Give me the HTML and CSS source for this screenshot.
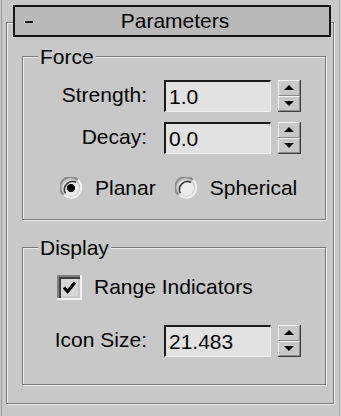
FILE: index.html
```html
<!DOCTYPE html>
<html>
<head>
<meta charset="utf-8">
<link rel="stylesheet" href="styles.css">
</head>
<body>
<div class="panel">
  <div class="rollout">
    <div class="title-btn">
      <span class="minus"></span>
      <span class="title-text">Parameters</span>
      <span></span>
    </div>

    <div class="group force">
      <div class="group-label">Force</div>
      <div class="rows">
        <div class="row-label">Strength:</div>
        <div class="field">1.0</div>
        <div class="spinner"><span class="spin up"><i></i></span><span class="spin down"><i></i></span></div>

        <div class="row-label">Decay:</div>
        <div class="field">0.0</div>
        <div class="spinner"><span class="spin up"><i></i></span><span class="spin down"><i></i></span></div>
      </div>
      <div class="radios">
        <label class="radio">
          <svg width="22" height="22" viewBox="0 0 22 22">
            <path d="M3.2 17.8 A10 10 0 0 1 18 3" fill="none" stroke="#8a8a8a" stroke-width="2"/>
            <path d="M18 3 A10 10 0 0 1 4 18" fill="none" stroke="#f0f0f0" stroke-width="2"/>
            <circle cx="11" cy="11" r="8" fill="#ececec"/>
            <path d="M5.4 16.2 A8 8 0 0 1 16.2 5.4" fill="none" stroke="#3c3c3c" stroke-width="1.6"/>
            <circle cx="11" cy="11" r="4" fill="#000"/>
          </svg>
          <span>Planar</span>
        </label>
        <label class="radio">
          <svg width="22" height="22" viewBox="0 0 22 22">
            <path d="M3.2 17.8 A10 10 0 0 1 18 3" fill="none" stroke="#8a8a8a" stroke-width="2"/>
            <path d="M18 3 A10 10 0 0 1 4 18" fill="none" stroke="#f0f0f0" stroke-width="2"/>
            <circle cx="11" cy="11" r="8" fill="#ececec"/>
            <path d="M5.4 16.2 A8 8 0 0 1 16.2 5.4" fill="none" stroke="#3c3c3c" stroke-width="1.6"/>
          </svg>
          <span>Spherical</span>
        </label>
      </div>
    </div>

    <div class="group display">
      <div class="group-label">Display</div>
      <label class="check">
        <svg width="25" height="25" viewBox="0 0 25 25">
          <rect x="0" y="0" width="25" height="25" fill="#f2f2f2"/>
          <rect x="0" y="0" width="23" height="23" fill="#808080"/>
          <rect x="2" y="2" width="23" height="23" fill="#f2f2f2"/>
          <rect x="2" y="2" width="21" height="21" fill="#404040"/>
          <rect x="4" y="4" width="19" height="19" fill="#d8d8d8"/>
          <rect x="4" y="21" width="19" height="2" fill="#c8c8c8"/>
          <rect x="21" y="4" width="2" height="19" fill="#c8c8c8"/>
          <path d="M7 12.5 L10.5 16.5 L18 7.5" fill="none" stroke="#000" stroke-width="3.2"/>
        </svg>
        <span>Range Indicators</span>
      </label>
      <div class="rows">
        <div class="row-label">Icon Size:</div>
        <div class="field">21.483</div>
        <div class="spinner"><span class="spin up"><i></i></span><span class="spin down"><i></i></span></div>
      </div>
    </div>
  </div>
</div>
</body>
</html>
```

FILE: styles.css
```css
html, body {
  margin: 0;
  padding: 0;
  background: #c8c8c8;
}

body {
  font-family: "Liberation Sans", Arial, sans-serif;
  font-size: 21px;
  color: #000;
  width: 341px;
  height: 416px;
  overflow: hidden;
}

.panel {
  margin: 0 1px 0 1px;
  border-left: 1px solid #9c9c9c;
  border-right: 1px solid #b0b0b0;
  height: 416px;
  overflow: hidden;
}

.rollout {
  margin: 22px 5px 0 4px;
  border: 1px solid #7c7c7c;
  box-shadow: inset 1px 1px 0 #ececec, 1px 1px 0 #ececec;
  padding-bottom: 18px;
}

.title-btn {
  margin: -18px 2px 0 6px;
  height: 32px;
  box-sizing: border-box;
  border: 2px solid #141414;
  background: #b9b9b9;
  display: grid;
  grid-template-columns: 1fr auto 1fr;
  align-items: center;
}

.minus {
  width: 8px;
  height: 2px;
  background: #111;
  margin-left: 10px;
  margin-top: 1px;
}

.title-text {
  line-height: 28px;
  padding-left: 6px;
}

.group {
  margin: 19px 7px 0 15px;
  border: 1px solid #7c7c7c;
  box-shadow: inset 1px 1px 0 #ececec, 1px 1px 0 #ececec;
}

.display {
  margin-top: 27px;
  padding-bottom: 27px;
}

.force {
  padding-bottom: 20px;
}

.group-label {
  width: fit-content;
  margin: -10px 0 0 15px;
  padding: 0 2px;
  height: 20px;
  line-height: 20px;
  background: #c8c8c8;
}

.rows {
  display: grid;
  grid-template-columns: 141px 114px 23px;
  row-gap: 10px;
  margin-top: 13px;
  align-items: center;
}

.display .rows {
  margin-top: 26px;
}

.row-label {
  text-align: right;
  padding-right: 17px;
  line-height: 24px;
  margin-top: -2px;
}

.field {
  margin-right: 7px;
  height: 32px;
  box-sizing: border-box;
  border-top: 2px solid #1a1a1a;
  border-left: 2px solid #1a1a1a;
  border-right: 1px solid #f0f0f0;
  border-bottom: 1px solid #f0f0f0;
  background: #e2e2e2;
  padding-left: 3px;
  line-height: 30px;
}

.spinner {
  height: 32px;
  box-sizing: border-box;
  display: flex;
  flex-direction: column;
  border-right: 1px solid #404040;
  border-bottom: 1px solid #404040;
}

.spin {
  flex: 1;
  display: flex;
  align-items: center;
  justify-content: center;
  border-top: 1px solid #f4f4f4;
  border-left: 1px solid #f4f4f4;
  border-right: 1px solid #8a8a8a;
  border-bottom: 1px solid #8a8a8a;
  background: #c8c8c8;
}

.spin i {
  width: 0;
  height: 0;
  border-left: 5px solid transparent;
  border-right: 5px solid transparent;
}

.up i {
  border-bottom: 5px solid #000;
}

.down i {
  border-top: 5px solid #000;
}

.radios {
  display: flex;
  margin-top: 23px;
  padding-left: 37px;
  height: 22px;
  align-items: center;
}

.radio {
  display: flex;
  align-items: center;
  gap: 13px;
}

.radio + .radio {
  margin-left: 19px;
}

.radio svg, .check svg {
  display: block;
  flex: none;
}

.check {
  display: flex;
  align-items: center;
  gap: 12px;
  margin: 17px 0 0 34px;
  height: 24px;
}
```
